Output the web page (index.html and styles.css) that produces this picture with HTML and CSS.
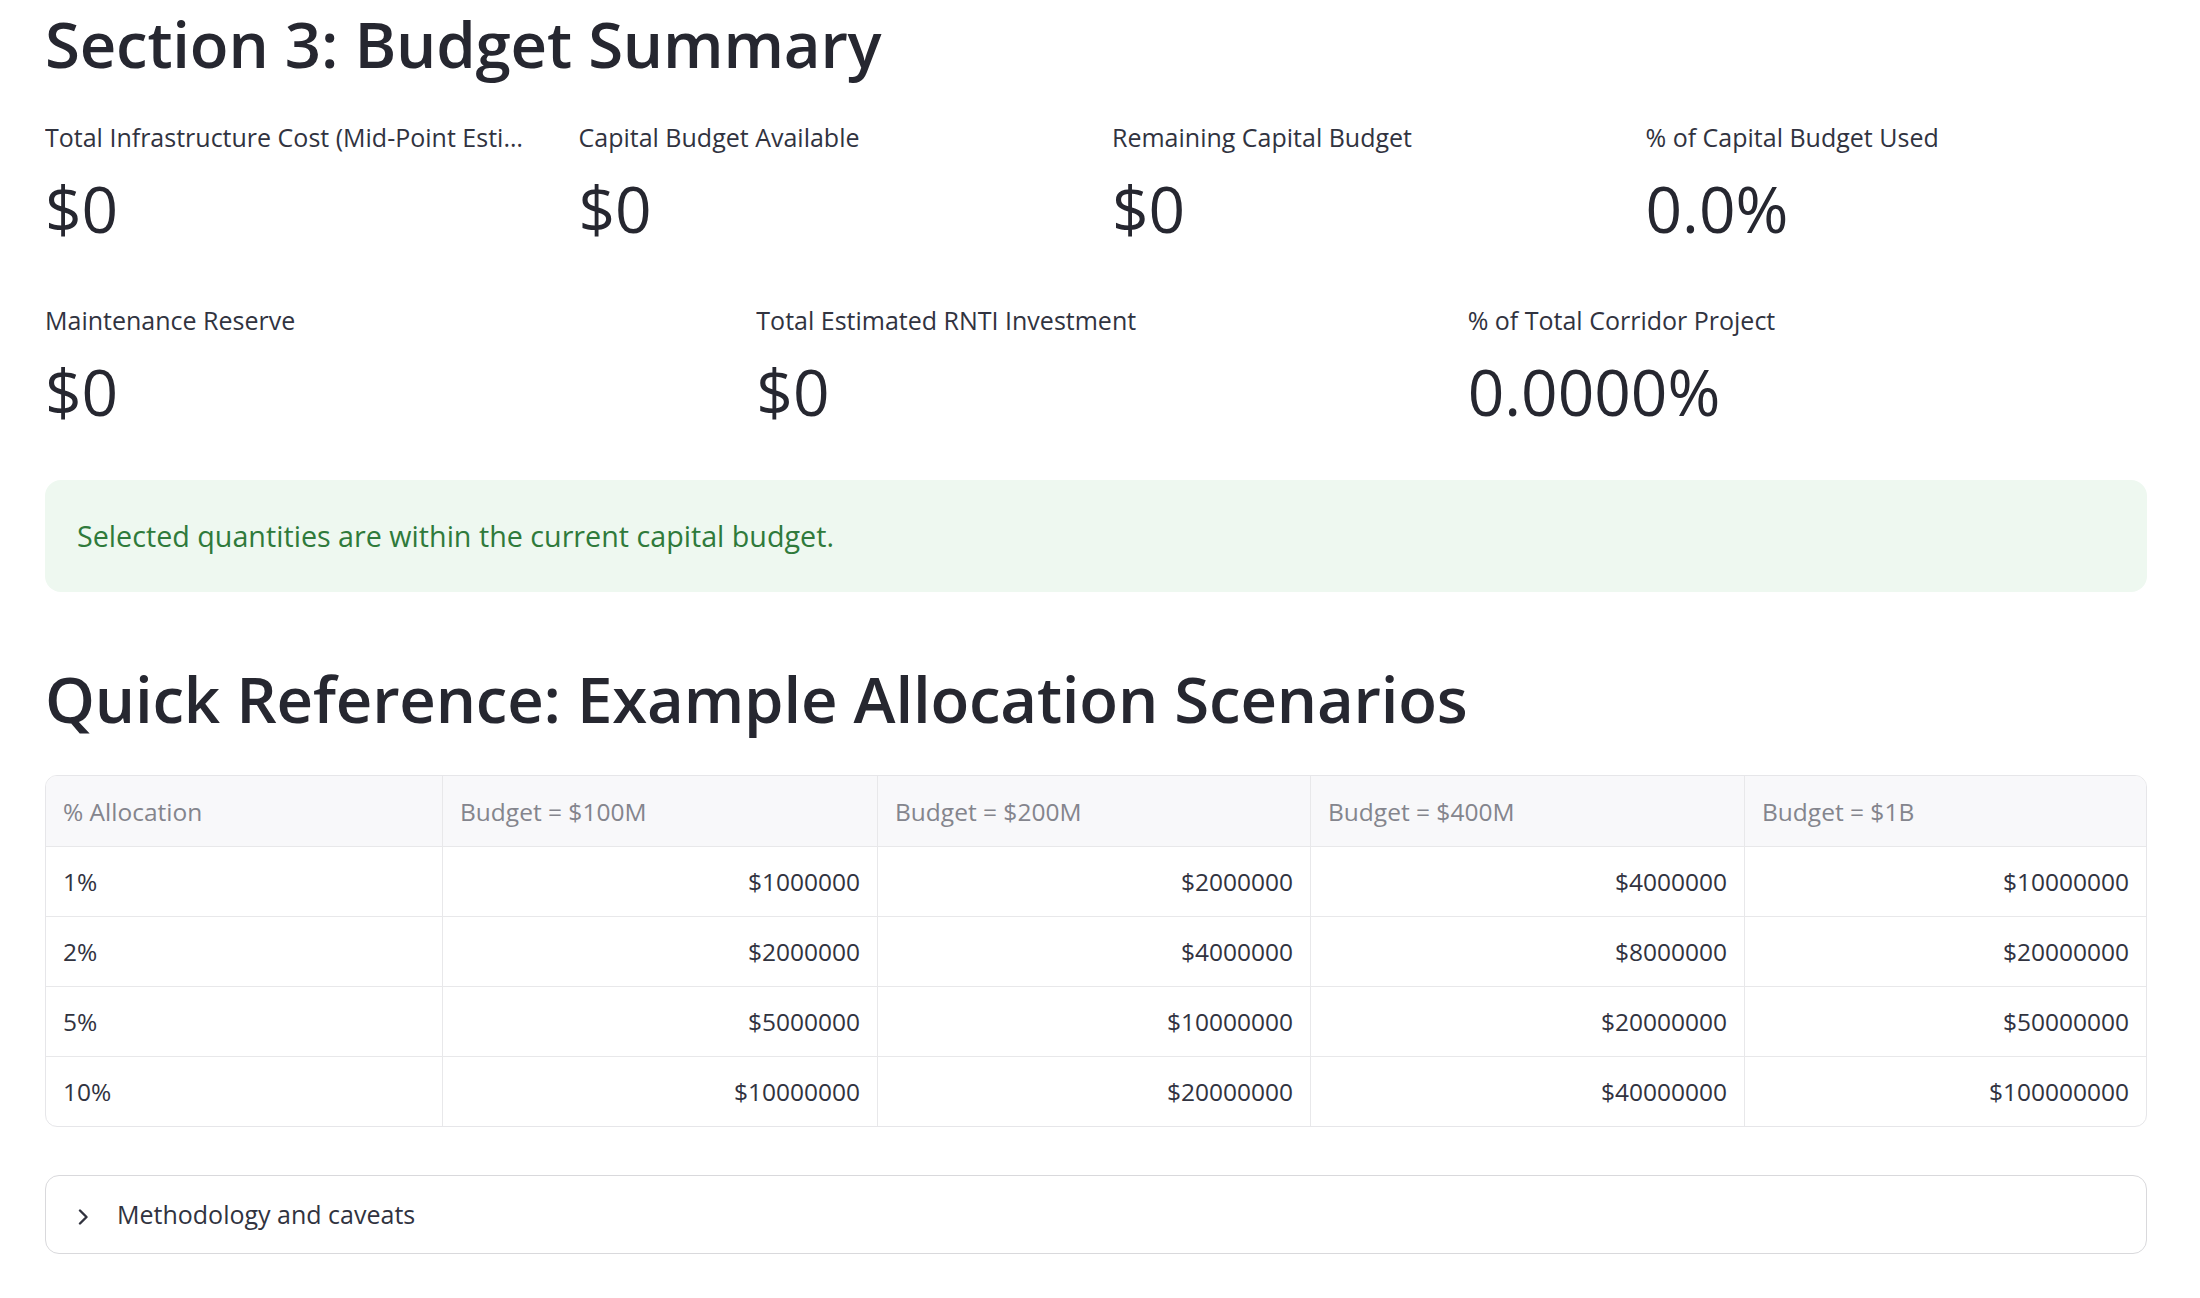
FILE: index.html
```html
<!DOCTYPE html>
<html lang="en">
<head>
<meta charset="utf-8">
<title>Budget Summary</title>
<link rel="stylesheet" href="styles.css">
</head>
<body>
<main class="page">
  <h2 class="heading">Section 3: Budget Summary</h2>

  <div class="metrics metrics-4">
    <div class="metric">
      <div class="metric-label">Total Infrastructure Cost (Mid-Point Estimate)</div>
      <div class="metric-value">$0</div>
    </div>
    <div class="metric">
      <div class="metric-label">Capital Budget Available</div>
      <div class="metric-value">$0</div>
    </div>
    <div class="metric">
      <div class="metric-label">Remaining Capital Budget</div>
      <div class="metric-value">$0</div>
    </div>
    <div class="metric">
      <div class="metric-label">% of Capital Budget Used</div>
      <div class="metric-value">0.0%</div>
    </div>
  </div>

  <div class="metrics metrics-3">
    <div class="metric">
      <div class="metric-label">Maintenance Reserve</div>
      <div class="metric-value">$0</div>
    </div>
    <div class="metric">
      <div class="metric-label">Total Estimated RNTI Investment</div>
      <div class="metric-value">$0</div>
    </div>
    <div class="metric">
      <div class="metric-label">% of Total Corridor Project</div>
      <div class="metric-value">0.0000%</div>
    </div>
  </div>

  <div class="alert-success">Selected quantities are within the current capital budget.</div>

  <h2 class="heading heading-second">Quick Reference: Example Allocation Scenarios</h2>

  <div class="dataframe">
    <div class="cell head">% Allocation</div>
    <div class="cell head">Budget = $100M</div>
    <div class="cell head">Budget = $200M</div>
    <div class="cell head">Budget = $400M</div>
    <div class="cell head last-col">Budget = $1B</div>

    <div class="cell">1%</div>
    <div class="cell num">$1000000</div>
    <div class="cell num">$2000000</div>
    <div class="cell num">$4000000</div>
    <div class="cell num last-col">$10000000</div>

    <div class="cell">2%</div>
    <div class="cell num">$2000000</div>
    <div class="cell num">$4000000</div>
    <div class="cell num">$8000000</div>
    <div class="cell num last-col">$20000000</div>

    <div class="cell">5%</div>
    <div class="cell num">$5000000</div>
    <div class="cell num">$10000000</div>
    <div class="cell num">$20000000</div>
    <div class="cell num last-col">$50000000</div>

    <div class="cell last-row">10%</div>
    <div class="cell num last-row">$10000000</div>
    <div class="cell num last-row">$20000000</div>
    <div class="cell num last-row">$40000000</div>
    <div class="cell num last-row last-col">$100000000</div>
  </div>

  <div class="expander">
    <svg class="chevron" width="20" height="20" viewBox="0 0 20 20" aria-hidden="true">
      <path d="M8 5.5 L14.5 12 L8 18.5" fill="none" stroke="#31333f" stroke-width="2.4" stroke-linecap="round" stroke-linejoin="round"/>
    </svg>
    <span class="expander-label">Methodology and caveats</span>
  </div>
</main>
</body>
</html>
```
FILE: styles.css
```css
html, body {
  margin: 0;
  padding: 0;
  background: #ffffff;
}

body {
  font-family: "Open Sans", "Noto Sans", sans-serif;
  color: #31333f;
}

.page {
  padding: 0 53px 0 45px;
}

.heading {
  margin: 0;
  font-size: 63.5px;
  line-height: 87px;
  font-weight: 600;
  color: #262730;
  letter-spacing: -0.2px;
  white-space: nowrap;
}

.heading-second {
  margin-top: 63px;
}

.metrics {
  display: grid;
  column-gap: 32px;
}

.metrics-4 {
  grid-template-columns: repeat(4, 1fr);
  margin-top: 33px;
}

.metrics-3 {
  grid-template-columns: repeat(3, 1fr);
  margin-top: 56px;
}

.metric {
  min-width: 0;
}

.metric-label {
  font-size: 25px;
  line-height: 35px;
  color: #31333f;
  white-space: nowrap;
  overflow: hidden;
  text-overflow: ellipsis;
  padding-right: 16px;
}

.metric-value {
  margin-top: 15px;
  font-size: 64px;
  line-height: 77px;
  color: #262730;
  white-space: nowrap;
}

.alert-success {
  margin-top: 50px;
  padding: 36px 32px;
  border-radius: 16px;
  background: #eef8f0;
  color: #2f7a3b;
  font-size: 28.7px;
  line-height: 40px;
}

.dataframe {
  margin-top: 33px;
  display: grid;
  grid-template-columns: 397px 435px 433px 434px 1fr;
  border: 1px solid #e6e6e9;
  border-radius: 12px;
  overflow: hidden;
}

.cell {
  height: 69px;
  display: flex;
  align-items: center;
  padding: 0 17px;
  font-size: 24.5px;
  color: #31333f;
  border-right: 1px solid #e8e8ea;
  border-bottom: 1px solid #e8e8ea;
  white-space: nowrap;
}

.cell.head {
  height: 70px;
  background: #f8f8fa;
  color: #84858d;
}

.cell.num {
  justify-content: flex-end;
}

.cell.last-col {
  border-right: none;
}

.cell.last-row {
  border-bottom: none;
}

.expander {
  margin-top: 48px;
  margin-bottom: 40px;
  display: flex;
  align-items: center;
  padding: 21px 24px 21px 26px;
  border: 1px solid #d9d9dc;
  border-radius: 14px;
}

.chevron {
  flex: none;
  display: block;
}

.expander-label {
  margin-left: 25px;
  font-size: 25px;
  line-height: 35px;
  color: #31333f;
}
```
